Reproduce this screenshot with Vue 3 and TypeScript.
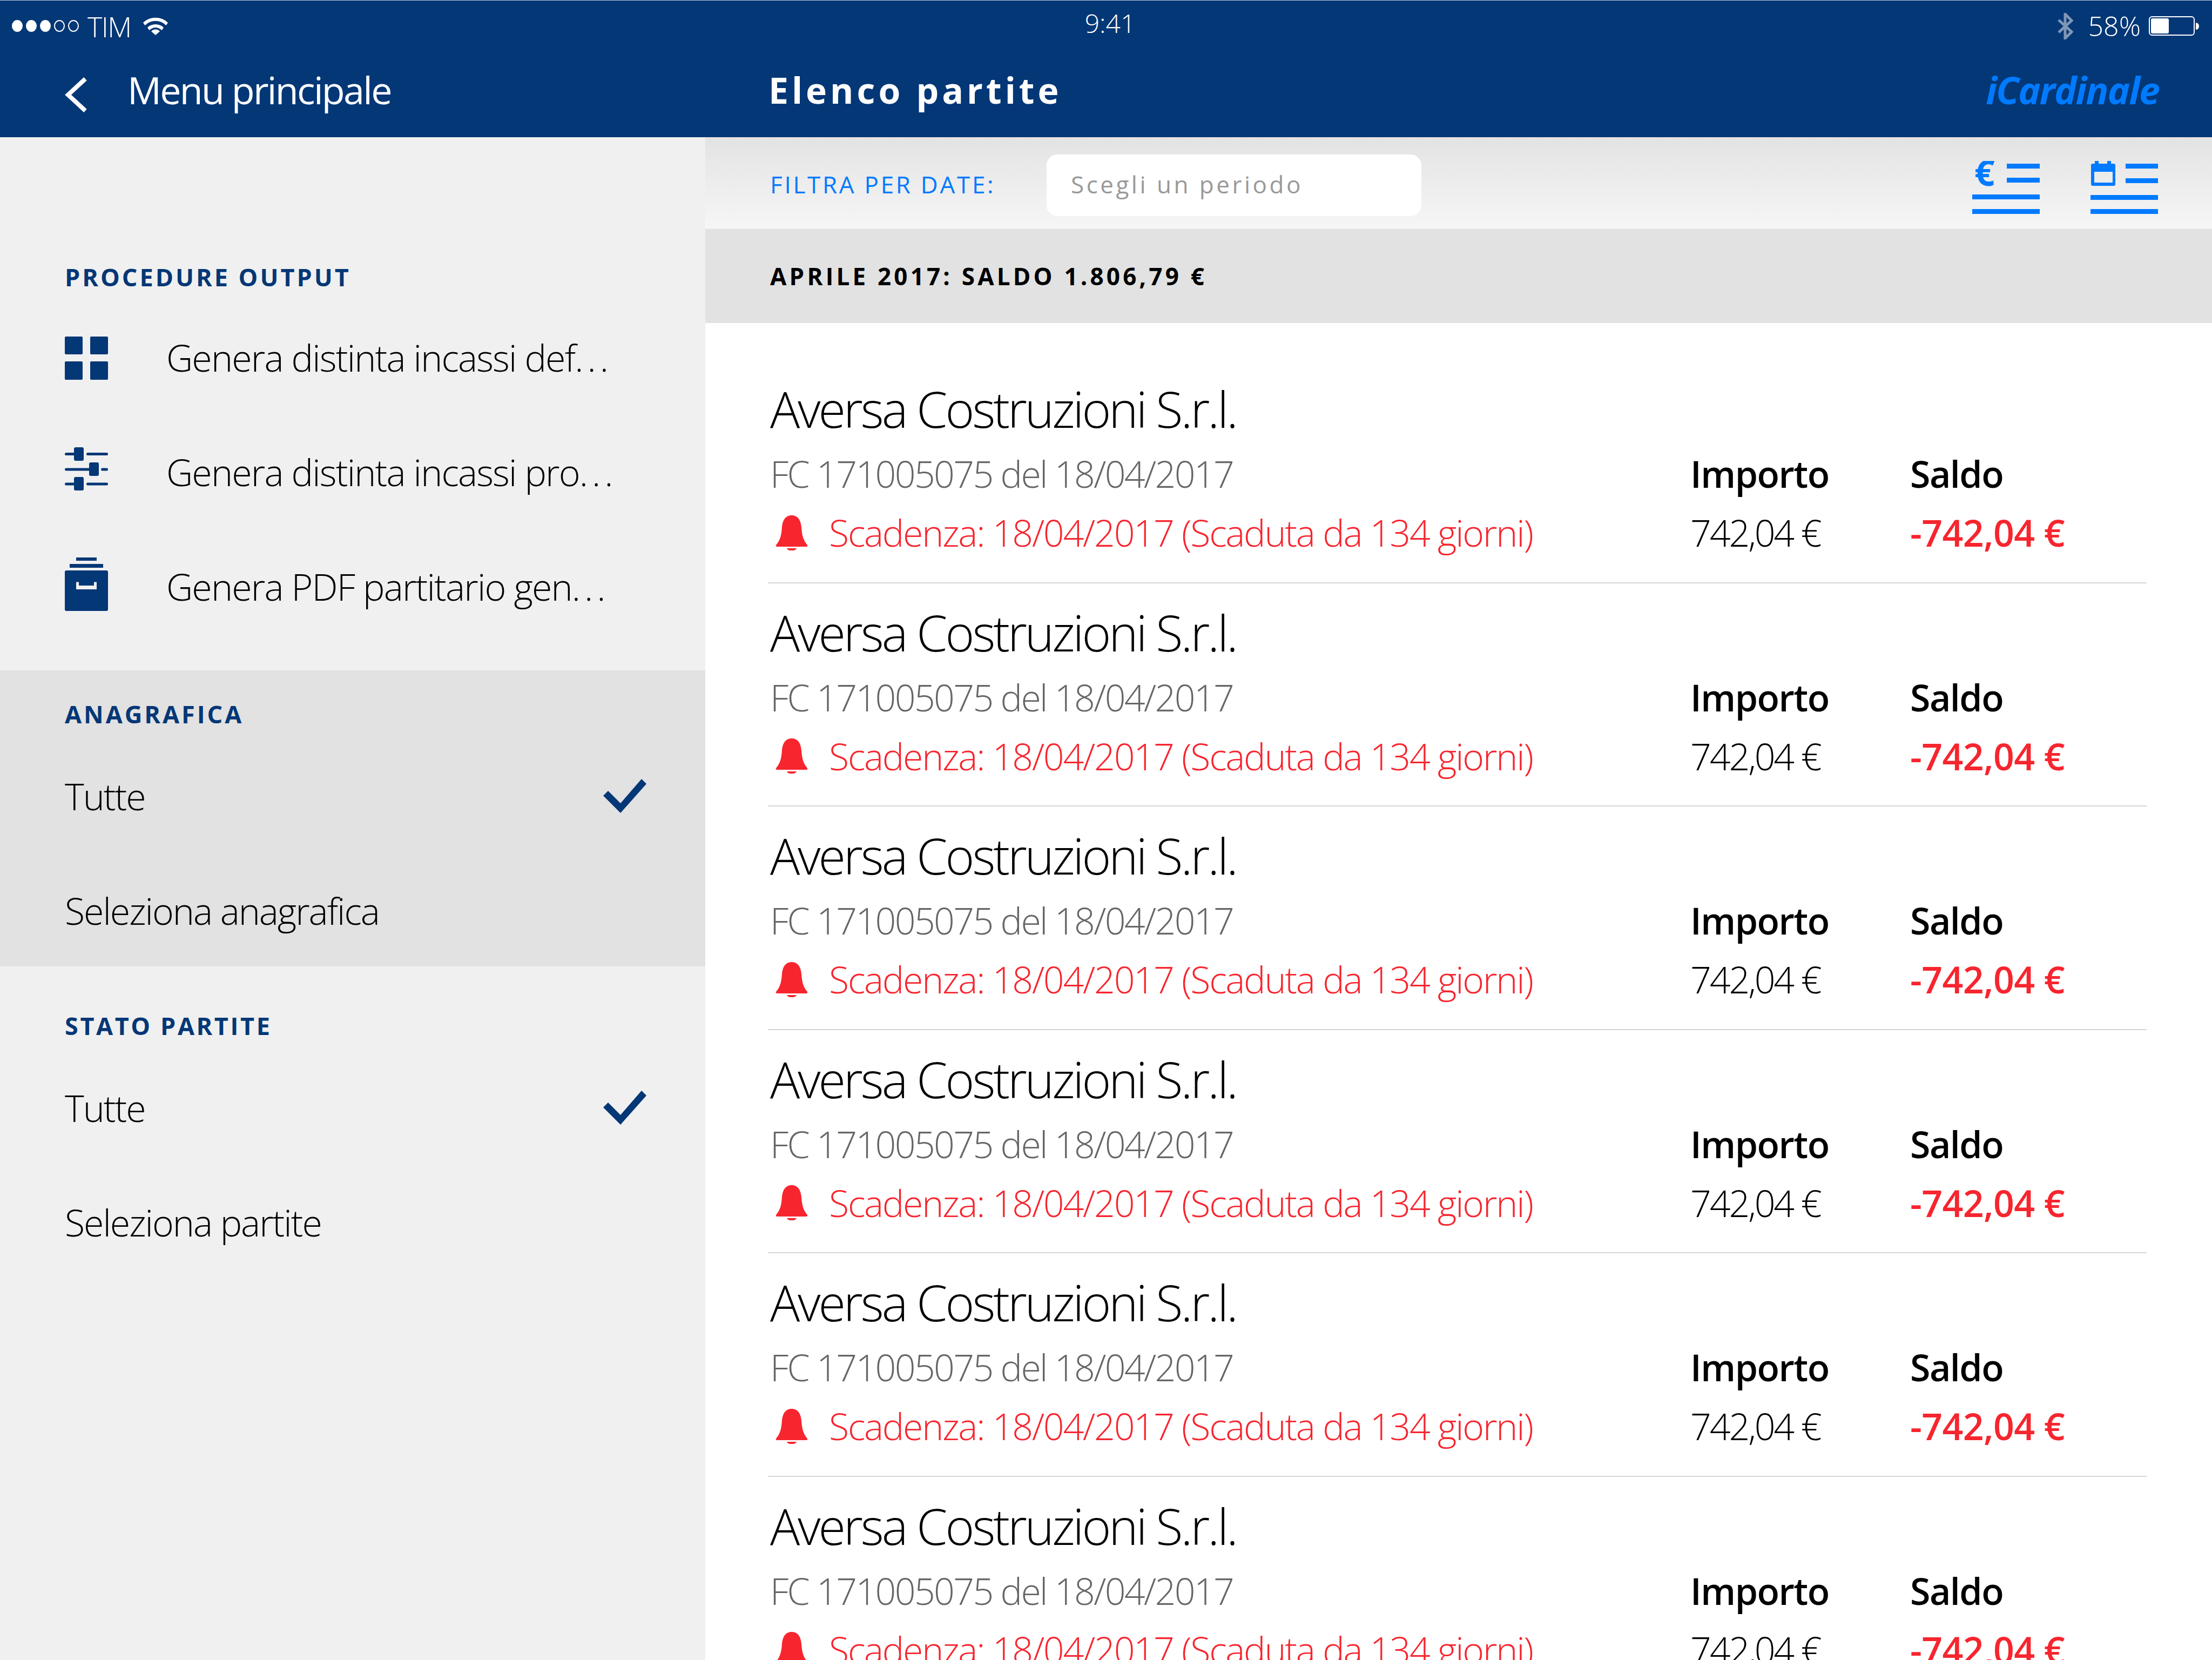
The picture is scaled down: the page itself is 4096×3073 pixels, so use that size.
<script setup lang="ts">
const partite = [1, 2, 3, 4, 5, 6]
</script>

<template>
  <div class="page">
    <header class="top">
      <div class="status">
        <div class="status-left">
          <span class="dots">
            <i class="dot on"></i><i class="dot on"></i><i class="dot on"></i><i class="dot"></i><i class="dot"></i>
          </span>
          <span class="carrier">TIM</span>
          <svg class="wifi" viewBox="0 0 46 34" width="46" height="34">
            <path d="M0 11 A33 33 0 0 1 46 11 L42.5 16 A27 27 0 0 0 3.5 16 Z" fill="#fff" />
            <path d="M8 20 A22 22 0 0 1 38 20 L34.5 25 A16 16 0 0 0 11.5 25 Z" fill="#fff" />
            <path d="M15 27 A11 11 0 0 1 31 27 L23 34 Z" fill="#fff" />
          </svg>
        </div>
        <div class="clock">9:41</div>
        <div class="status-right">
          <svg class="bt" viewBox="0 0 29 49" width="29" height="49">
            <path d="M2 13 L26 35 L14 47 V2 L26 14 L2 36" fill="none" stroke="#7f97b6" stroke-width="5" />
          </svg>
          <span class="pct">58%</span>
          <span class="battery"><i class="charge"></i></span>
          <span class="nub"></span>
        </div>
      </div>
      <div class="nav">
        <div class="nav-left">
          <svg class="back" viewBox="0 0 41 65" width="41" height="65">
            <path d="M38 3 L6 32.5 L38 62" fill="none" stroke="#fff" stroke-width="8" />
          </svg>
          <span class="nav-back">Menu principale</span>
        </div>
        <div class="nav-right">
          <span class="nav-title">Elenco partite</span>
          <span class="brand">iCardinale</span>
        </div>
      </div>
    </header>

    <div class="body">
      <aside class="side">
        <section class="sec sec-out">
          <h3 class="sec-title">PROCEDURE OUTPUT</h3>
          <div class="side-row">
            <svg class="side-ico" viewBox="0 0 80 80" width="80" height="80">
              <rect x="0" y="0" width="33" height="33" rx="2" />
              <rect x="47" y="0" width="33" height="33" rx="2" />
              <rect x="0" y="46" width="33" height="34" rx="2" />
              <rect x="47" y="46" width="33" height="34" rx="2" />
            </svg>
            <span class="side-text">Genera distinta incassi def<span class="more">...</span></span>
          </div>
          <div class="side-row">
            <svg class="side-ico ico-sliders" viewBox="0 0 80 80" width="80" height="80">
              <rect x="0" y="10" width="20" height="5" rx="2.5" />
              <rect x="40" y="10" width="40" height="5" rx="2.5" />
              <rect x="17" y="0" width="18" height="25" rx="3" />
              <rect x="0" y="38.5" width="48" height="5" rx="2.5" />
              <rect x="67" y="38.5" width="13" height="5" rx="2.5" />
              <rect x="45" y="28" width="18" height="25" rx="3" />
              <rect x="0" y="65.5" width="20" height="5" rx="2.5" />
              <rect x="40" y="65.5" width="40" height="5" rx="2.5" />
              <rect x="17" y="55" width="18" height="25" rx="3" />
            </svg>
            <span class="side-text">Genera distinta incassi pro<span class="more">...</span></span>
          </div>
          <div class="side-row">
            <svg class="side-ico ico-archive" viewBox="0 0 80 100" width="80" height="100">
              <rect x="21" y="0" width="38" height="6" />
              <rect x="9" y="12" width="62" height="7" />
              <path d="M3 24 H77 a3 3 0 0 1 3 3 V96 a3 3 0 0 1 -3 3 H3 a3 3 0 0 1 -3 -3 V27 a3 3 0 0 1 3 -3 Z M21 45.500 V59 H59 V45.500 H54 V52 H26 V45.500 Z" fill-rule="evenodd" />
            </svg>
            <span class="side-text">Genera PDF partitario gen<span class="more">...</span></span>
          </div>
        </section>

        <section class="sec sec-band">
          <h3 class="sec-title">ANAGRAFICA</h3>
          <div class="opt-row">
            <span class="opt-text">Tutte</span>
            <svg class="check" viewBox="0 0 80 63" width="80" height="63">
              <path d="M0 31 L9 22 L32 45 L71 0 L80 9 L32 63 Z" fill="#043776" />
            </svg>
          </div>
          <div class="opt-row">
            <span class="opt-text">Seleziona anagrafica</span>
          </div>
        </section>

        <section class="sec sec-state">
          <h3 class="sec-title">STATO PARTITE</h3>
          <div class="opt-row">
            <span class="opt-text">Tutte</span>
            <svg class="check" viewBox="0 0 80 63" width="80" height="63">
              <path d="M0 31 L9 22 L32 45 L71 0 L80 9 L32 63 Z" fill="#043776" />
            </svg>
          </div>
          <div class="opt-row">
            <span class="opt-text">Seleziona partite</span>
          </div>
        </section>
      </aside>

      <main class="main">
        <div class="filter">
          <span class="filter-label">FILTRA PER DATE:</span>
          <div class="filter-input">Scegli un periodo</div>
          <div class="sort">
            <svg class="sort-ico" viewBox="0 0 125 98" width="125" height="98">
              <text x="4" y="46" class="euro">€</text>
              <rect x="64" y="5" width="61" height="9" />
              <rect x="64" y="31" width="61" height="9" />
              <rect x="0" y="62" width="125" height="9" />
              <rect x="0" y="89" width="125" height="9" />
            </svg>
            <svg class="sort-ico" viewBox="0 0 125 98" width="125" height="98">
              <path d="M4 5 H8 V0 H15 V5 H31 V0 H38 V5 H43 a3 3 0 0 1 3 3 V43 a3 3 0 0 1 -3 3 H4 a3 3 0 0 1 -3 -3 V8 a3 3 0 0 1 3 -3 Z M7 20 V40 H41 V20 Z" fill-rule="evenodd" />
              <rect x="65" y="5" width="60" height="9" />
              <rect x="65" y="32" width="60" height="9" />
              <rect x="0" y="63" width="125" height="9" />
              <rect x="0" y="89" width="125" height="9" />
            </svg>
          </div>
        </div>
        <div class="month">APRILE 2017: SALDO 1.806,79 €</div>
        <div class="list">
          <article v-for="p in partite" :key="p" class="item">
            <div class="item-title">Aversa Costruzioni S.r.l.</div>
            <div class="item-sub">FC 171005075 del 18/04/2017</div>
            <div class="col-head">Importo</div>
            <div class="col-head">Saldo</div>
            <div class="item-due">
              <svg class="bell" viewBox="0 0 60 65" width="60" height="65">
                <path d="M30 0 C18 0 13 10 12 22 C11 36 9 46 1 55 Q0 58 3 58 H57 Q60 58 59 55 C51 46 49 36 48 22 C47 10 42 0 30 0 Z" />
                <path d="M21 61 H39 C37 67 23 67 21 61 Z" />
              </svg>
              <span>Scadenza: 18/04/2017 (Scaduta da 134 giorni)</span>
            </div>
            <div class="amount">742,04 €</div>
            <div class="balance">-742,04 €</div>
          </article>
        </div>
      </main>
    </div>
  </div>
</template>

<style>
html, body { margin: 0; background: #fff; }
</style>

<style scoped>
.page {
  width: 4096px;
  height: 3073px;
  overflow: hidden;
  font-family: "Open Sans", "Noto Sans", sans-serif;
  font-weight: 300;
  color: #000;
  display: flex;
  flex-direction: column;
}
.top {
  height: 254px;
  box-sizing: border-box;
  border-top: 1px solid #bcc4d0;
  background: #043776;
  color: #fff;
  flex-shrink: 0;
}
.status {
  height: 96px;
  display: flex;
  justify-content: space-between;
  position: relative;
}
.status-left {
  display: flex;
  align-items: center;
  padding-left: 22px;
  height: 94px;
}
.dots { display: flex; gap: 6px; }
.dot {
  display: block;
  width: 20px;
  height: 22px;
  box-sizing: border-box;
  border: 2px solid #fff;
  border-radius: 50%;
}
.dot.on { background: #fff; }
.carrier {
  margin-left: 16px;
  font-size: 52px;
  letter-spacing: -1.5px;
}
.wifi { margin-left: 22px; }
.clock {
  position: absolute;
  left: 0;
  right: 0;
  top: 10px;
  padding-left: 15px;
  text-align: center;
  font-size: 48px;
  line-height: 64px;
}
.status-right {
  display: flex;
  align-items: center;
  height: 94px;
  padding-right: 24px;
}
.pct {
  margin-left: 28px;
  font-size: 50px;
}
.battery {
  display: block;
  margin-left: 15px;
  width: 85px;
  height: 36px;
  box-sizing: border-box;
  border: 2px solid #fff;
  border-radius: 6px;
  padding: 2px;
}
.charge {
  display: block;
  width: 33px;
  height: 28px;
  background: #fff;
  border-radius: 3px;
}
.nub {
  display: block;
  margin-left: 2px;
  width: 6px;
  height: 13px;
  background: #fff;
  border-radius: 0 7px 7px 0;
}
.nav {
  height: 157px;
  display: flex;
  align-items: center;
}
.nav-left {
  width: 1306px;
  padding-left: 120px;
  box-sizing: border-box;
  display: flex;
  align-items: center;
}
.nav-back {
  margin-left: 75px;
  font-size: 70px;
  line-height: 80px;
  margin-bottom: 19px;
  letter-spacing: -2.7px;
  font-weight: 400;
}
.nav-right {
  flex: 1;
  display: flex;
  align-items: center;
  justify-content: space-between;
  padding: 0 98px 19px 117px;
}
.nav-title {
  font-size: 66px;
  font-weight: 700;
  letter-spacing: 6px;
}
.brand {
  font-size: 70px;
  font-weight: 700;
  font-style: italic;
  color: #007aff;
  letter-spacing: -2px;
}
.body {
  flex: 1;
  display: flex;
  min-height: 0;
}
.side {
  width: 1306px;
  background: #f0f0f0;
  flex-shrink: 0;
}
.sec-title {
  margin: 0;
  font-size: 45px;
  line-height: 60px;
  font-weight: 700;
  letter-spacing: 4px;
  color: #043776;
}
.sec { padding-left: 120px; padding-right: 109px; box-sizing: border-box; }
.sec-out { height: 987px; padding-top: 229px; }
.sec-out .sec-title { margin-bottom: 14px; }
.sec-band { height: 548px; padding-top: 51px; background: #e2e2e2; }
.sec-state { padding-top: 80px; }
.sec-state .sec-title { letter-spacing: 3.6px; }
.sec-band .sec-title, .sec-state .sec-title { margin-bottom: 15px; }
.side-row {
  height: 212px;
  display: flex;
  align-items: center;
}
.side-ico {
  fill: #043776;
  flex-shrink: 0;
}
.ico-sliders { margin-bottom: 14px; }
.ico-archive { margin-bottom: 11px; }
.side-text {
  margin-left: 108px;
  font-size: 68px;
  line-height: 90px;
  margin-bottom: 3px;
  letter-spacing: -1.8px;
  white-space: nowrap;
}
.more { letter-spacing: 7px; }
.opt-row {
  height: 212px;
  display: flex;
  align-items: center;
  justify-content: space-between;
}
.opt-text {
  font-size: 68px;
  letter-spacing: -2px;
}
.main {
  flex: 1;
  background: #fff;
  min-width: 0;
}
.filter {
  height: 170px;
  box-sizing: border-box;
  background: linear-gradient(#e3e3e3, #f6f6f6);
  border-bottom: 1px solid #ececec;
  display: flex;
  align-items: center;
  padding-left: 120px;
}
.filter-label {
  width: 512px;
  font-size: 44px;
  font-weight: 400;
  letter-spacing: 3.7px;
  margin-top: 4px;
  color: #007aff;
}
.filter-input {
  width: 694px;
  height: 114px;
  margin-top: 8px;
  box-sizing: border-box;
  padding-left: 45px;
  background: #fff;
  border-radius: 20px;
  font-size: 44px;
  line-height: 110px;
  font-weight: 400;
  letter-spacing: 4.5px;
  color: #999;
}
.sort {
  margin-left: auto;
  margin-right: 100px;
  margin-top: 16px;
  display: flex;
  gap: 94px;
}
.sort-ico { fill: #007aff; }
.euro {
  font-family: "Open Sans", sans-serif;
  font-size: 66px;
  font-weight: 700;
}
.month {
  height: 174px;
  box-sizing: border-box;
  background: #e2e2e2;
  padding-left: 120px;
  font-size: 44px;
  line-height: 174px;
  font-weight: 700;
  letter-spacing: 5.2px;
  color: #000;
}
.list {
  padding: 68px 121px 0 116px;
}
.item {
  height: 413.6px;
  box-sizing: border-box;
  border-bottom: 2px solid #d6d6d6;
  padding: 38px 0 0 4px;
  display: grid;
  grid-template-columns: 1704px 407px 1fr;
  grid-template-rows: 106px 126px 100px;
}
.item-title {
  grid-column: 1 / -1;
  font-size: 92px;
  line-height: 106px;
  letter-spacing: -4px;
  white-space: nowrap;
}
.item-sub {
  font-size: 68px;
  line-height: 100px;
  padding-top: 17px;
  letter-spacing: -2.65px;
  color: #666;
  white-space: nowrap;
}
.col-head {
  font-size: 68px;
  line-height: 100px;
  padding-top: 17px;
  font-weight: 600;
  letter-spacing: -1.5px;
}
.item-due {
  display: flex;
  align-items: center;
  padding-left: 10px;
  color: #f7252e;
  font-size: 68px;
  line-height: 100px;
  letter-spacing: -2.2px;
  white-space: nowrap;
}
.item-due span { margin-left: 39px; }
.bell { fill: #f7252e; flex-shrink: 0; }
.amount {
  font-size: 68px;
  line-height: 100px;
  letter-spacing: -3.1px;
}
.balance {
  font-size: 68px;
  line-height: 100px;
  font-weight: 600;
  letter-spacing: -0.6px;
  color: #f7252e;
}
</style>
